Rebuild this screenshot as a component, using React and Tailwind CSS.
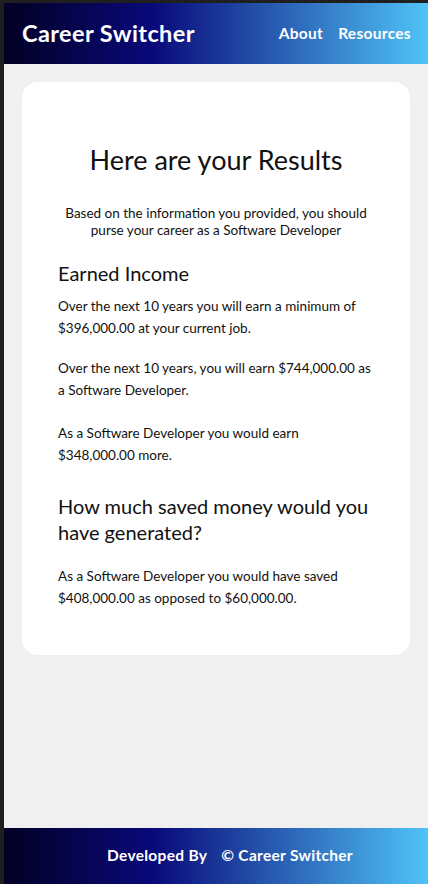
import React from "react";

const gradient =
  "bg-[linear-gradient(90deg,#020024_0%,#090979_35%,#4fc3f7_100%)]";

function Header() {
  return (
    <header
      className={`h-[61px] flex items-center justify-between pl-[18px] pr-[17px] text-white ${gradient}`}
    >
      <h1 className="text-[23.5px] font-bold tracking-[0.4px]">Career Switcher</h1>
      <nav className="flex gap-[15px] text-[15.5px] font-bold tracking-[0.3px]">
        <a>About</a>
        <a>Resources</a>
      </nav>
    </header>
  );
}

function Footer() {
  return (
    <footer
      className={`h-[56px] flex items-center justify-center gap-[14px] pl-[28px] text-white text-[15.5px] font-bold tracking-[0.3px] ${gradient}`}
    >
      <span>Developed By</span>
      <span>© Career Switcher</span>
    </footer>
  );
}

export default function App() {
  return (
    <div
      className="min-h-screen bg-[#1f1f1f] pl-1 pt-[3px] flex flex-col text-[#111]"
      style={{ fontFamily: "Lato, 'Noto Sans', sans-serif" }}
    >
      <Header />
      <main className="flex-1 bg-[#f0f0f0] px-[18px] pt-[18px]">
        {/* results card */}
        <div className="bg-white rounded-[16px] px-9 pt-[62px] pb-[46px]">
          <h2 className="text-center text-[27px] leading-[32px]">
            Here are your Results
          </h2>
          <p className="text-center text-[13.5px] leading-[17px] mt-[29px]">
            Based on the information you provided, you should
            <br />
            purse your career as a Software Developer
          </p>

          <h3 className="text-[20px] leading-[26px] mt-[21px]">Earned Income</h3>
          <p className="text-[13.5px] leading-[22px] mt-[9px]">
            Over the next 10 years you will earn a minimum of $396,000.00 at
            your current job.
          </p>
          <p className="text-[13.5px] leading-[22px] mt-[18px]">
            Over the next 10 years, you will earn $744,000.00 as a Software
            Developer.
          </p>
          <p className="text-[13.5px] leading-[22px] mt-[21px]">
            As a Software Developer you would earn $348,000.00 more.
          </p>

          <h3 className="text-[20px] leading-[26px] mt-[27px]">
            How much saved money would you have generated?
          </h3>
          <p className="text-[13.5px] leading-[22px] mt-[20px]">
            As a Software Developer you would have saved $408,000.00 as opposed
            to $60,000.00.
          </p>
        </div>
      </main>
      <Footer />
    </div>
  );
}
